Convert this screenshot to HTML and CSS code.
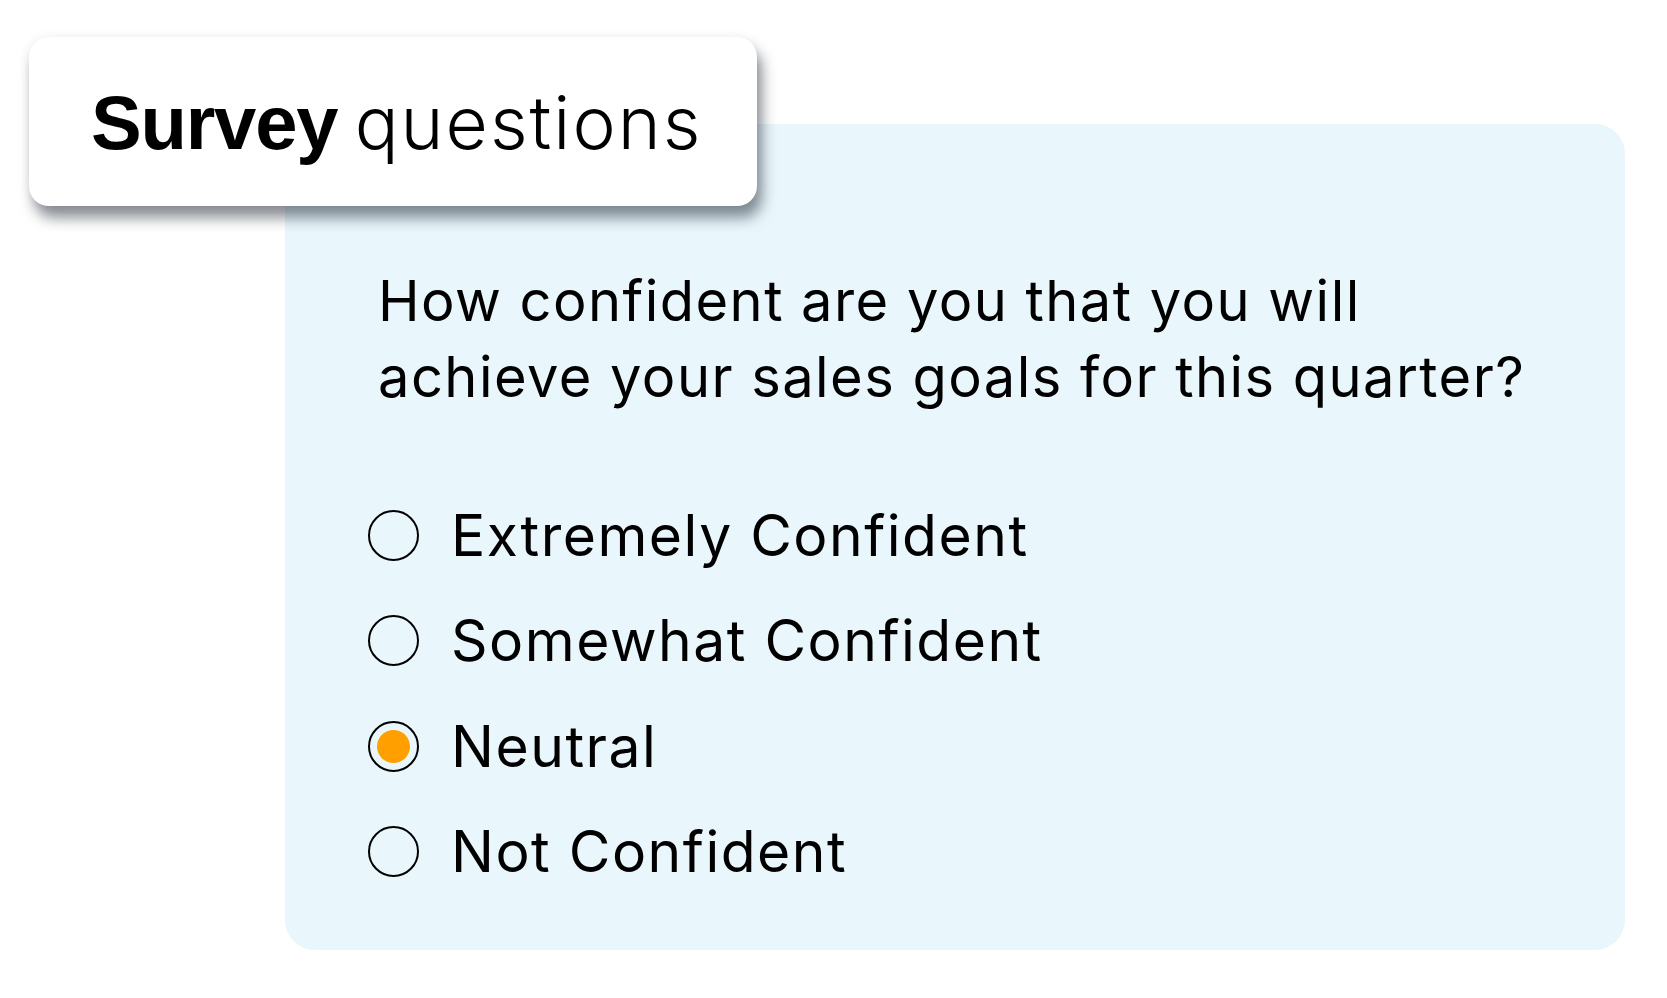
FILE: index.html
```html
<!DOCTYPE html>
<html>
<head>
<meta charset="utf-8">
<link rel="stylesheet" href="styles.css">
</head>
<body>
<div class="stage">
  <div class="title-card">
    <h1 class="title"><span class="title-bold">Survey</span> <span class="title-light">questions</span></h1>
  </div>
  <div class="panel">
    <p class="question">How confident are you that you will<br>achieve your sales goals for this quarter?</p>
    <ul class="options">
      <li class="option"><span class="radio"></span><span class="label">Extremely Confident</span></li>
      <li class="option"><span class="radio"></span><span class="label">Somewhat Confident</span></li>
      <li class="option"><span class="radio checked"></span><span class="label">Neutral</span></li>
      <li class="option"><span class="radio"></span><span class="label">Not Confident</span></li>
    </ul>
  </div>
</div>
</body>
</html>
```

FILE: styles.css
```css
html, body {
  margin: 0;
  padding: 0;
  background: #ffffff;
}
body {
  font-family: Inter, "Noto Sans", sans-serif;
  color: #000;
}
.stage {
  position: relative;
  width: 1667px;
  height: 998px;
}
.title-card {
  position: absolute;
  left: 29px;
  top: 37px;
  width: 728px;
  height: 169px;
  box-sizing: border-box;
  padding-left: 62px;
  background: #fff;
  border-radius: 20px;
  display: flex;
  align-items: center;
  z-index: 2;
  box-shadow: 0 0 12px rgba(0, 0, 0, 0.06), 5px 12px 14px rgba(45, 55, 65, 0.55);
}
.title {
  margin: 0;
  font-size: 76px;
  line-height: 1;
  font-weight: normal;
  white-space: nowrap;
}
.title-bold {
  font-family: "Liberation Sans", Arial, sans-serif;
  font-weight: 700;
  letter-spacing: -1.2px;
}
.title-light {
  font-family: Inter, sans-serif;
  font-weight: 300;
  font-size: 73px;
  letter-spacing: 2px;
  margin-left: -4px;
}
.panel {
  position: relative;
  margin-left: 285px;
  top: 124px;
  width: 1340px;
  height: 826px;
  box-sizing: border-box;
  padding: 139px 0 0 93px;
  background: #e9f6fb;
  border-radius: 30px;
}
.question {
  margin: 0;
  font-size: 56px;
  line-height: 76px;
  font-weight: 400;
  letter-spacing: 1.45px;
}
.options {
  list-style: none;
  margin: 68px 0 0 -10px;
  padding: 0;
}
.option {
  display: flex;
  align-items: center;
  height: 105.3px;
}
.radio {
  box-sizing: border-box;
  width: 51px;
  height: 51px;
  border: 2.5px solid #000;
  border-radius: 50%;
  display: flex;
  align-items: center;
  justify-content: center;
  flex: none;
}
.radio.checked::after {
  content: "";
  width: 33px;
  height: 33px;
  border-radius: 50%;
  background: #ff9f00;
}
.label {
  margin-left: 32px;
  font-size: 57px;
  line-height: 1;
  white-space: nowrap;
  letter-spacing: 1.5px;
}
```
